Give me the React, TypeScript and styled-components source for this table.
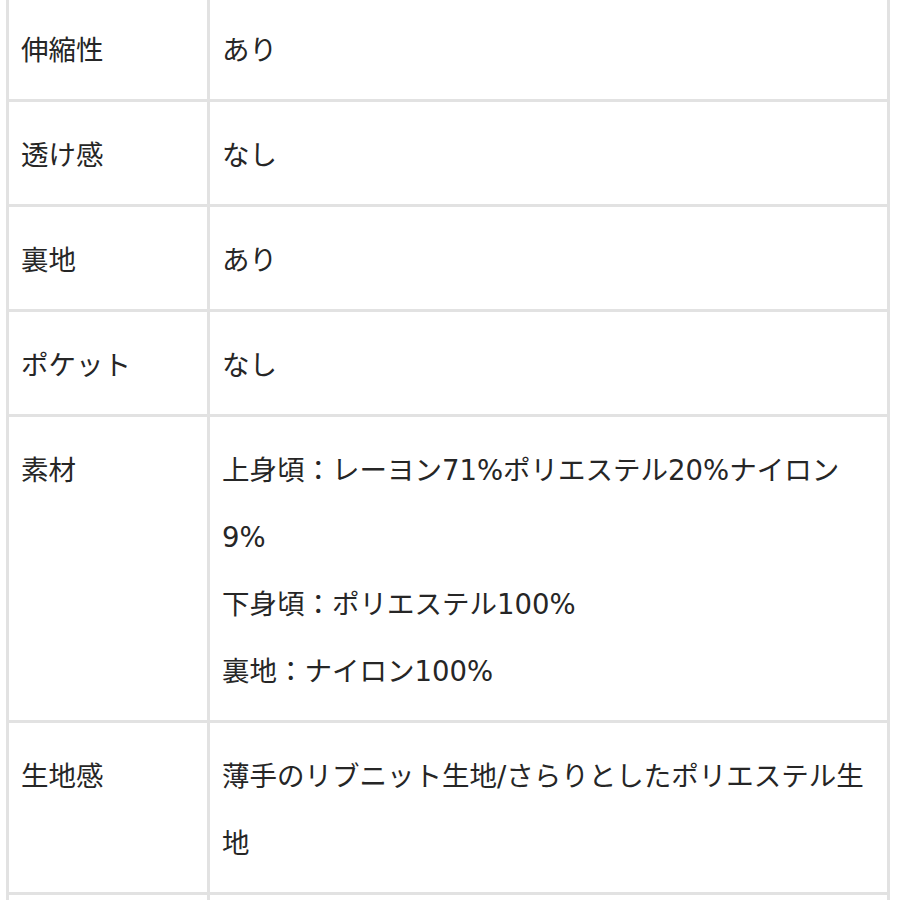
import React from 'react'
import styled, { createGlobalStyle } from 'styled-components'

const GlobalStyle = createGlobalStyle`
  html, body {
    margin: 0;
    padding: 0;
    background: #ffffff;
  }
  body {
    font-family: "DejaVu Sans", "Noto Sans CJK JP", sans-serif;
    color: #262626;
    overflow: hidden;
  }
`;

const Page = styled.div`
  padding: 0 10px 0 6px;
  margin-top: -6px;
`;

const SpecTable = styled.div`
  display: grid;
  grid-template-columns: 198px 1fr;
  gap: 3px;
  padding: 3px;
  width: 884px;
  box-sizing: border-box;
  background: #e2e2e2;
`;

const Cell = styled.div`
  background: #ffffff;
  min-height: 67px;
  padding: 20px 10px 15px 12px;
  font-size: 27.5px;
  line-height: 67px;
  color: #262626;
  word-break: break-all;
`;

const Line = styled.div``;

type Spec = { label: string; lines: string[] };

const specs: Spec[] = [
  { label: '伸縮性', lines: ['あり'] },
  { label: '透け感', lines: ['なし'] },
  { label: '裏地', lines: ['あり'] },
  { label: 'ポケット', lines: ['なし'] },
  {
    label: '素材',
    lines: [
      '上身頃：レーヨン71%ポリエステル20%ナイロン9%',
      '下身頃：ポリエステル100%',
      '裏地：ナイロン100%',
    ],
  },
  { label: '生地感', lines: ['薄手のリブニット生地/さらりとしたポリエステル生地'] },
  // next row starts just below the visible area
  { label: '', lines: [] },
];

const App = () => {
  return (
    <>
      <GlobalStyle />
      <Page>
        <SpecTable>
          {specs.map((spec, i) => (
            <React.Fragment key={i}>
              <Cell>{spec.label}</Cell>
              <Cell>
                {spec.lines.map((line) => (
                  <Line key={line}>{line}</Line>
                ))}
              </Cell>
            </React.Fragment>
          ))}
        </SpecTable>
      </Page>
    </>
  )
}

export default App
